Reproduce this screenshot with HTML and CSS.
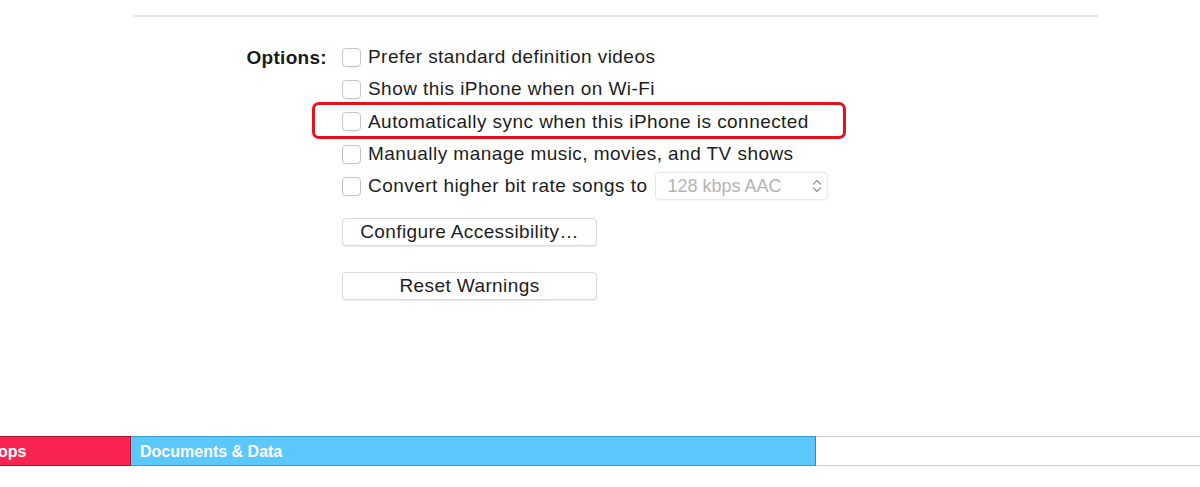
FILE: index.html
```html
<!DOCTYPE html>
<html>
<head>
<meta charset="utf-8">
<link rel="stylesheet" href="styles.css">
</head>
<body>
<div class="divider"></div>
<div class="options">
  <div class="label">Options:</div>
  <div class="list">
    <div class="row"><span class="cb"></span><span class="txt">Prefer standard definition videos</span></div>
    <div class="row"><span class="cb"></span><span class="txt">Show this iPhone when on Wi-Fi</span></div>
    <div class="row highlight"><span class="cb"></span><span class="txt">Automatically sync when this iPhone is connected</span></div>
    <div class="row"><span class="cb"></span><span class="txt">Manually manage music, movies, and TV shows</span></div>
    <div class="row"><span class="cb"></span><span class="txt">Convert higher bit rate songs to</span>
      <span class="select"><span class="sel-txt">128 kbps AAC</span>
        <svg class="chev" width="10" height="16" viewBox="0 0 10 16"><path d="M1.5 6 L5 2.5 L8.5 6 M1.5 10 L5 13.5 L8.5 10" fill="none" stroke="#9a9a9a" stroke-width="1.4" stroke-linecap="round" stroke-linejoin="round"/></svg>
      </span>
    </div>
    <div class="btn first">Configure Accessibility…</div>
    <div class="btn second">Reset Warnings</div>
  </div>
</div>
<div class="capacity">
  <div class="seg apps">ops</div>
  <div class="seg docs">Documents &amp; Data</div>
  <div class="seg free"></div>
</div>
</body>
</html>
```
FILE: styles.css
```css
html, body {
  margin: 0;
  padding: 0;
  background: #fff;
  width: 1200px;
  height: 487px;
  overflow: hidden;
  font-family: "Liberation Sans", Arial, sans-serif;
  color: #1d1d1d;
}
.divider {
  margin-left: 133px;
  width: 965px;
  height: 2px;
  margin-top: 15px;
  background: #e4e4e4;
}
.options {
  display: flex;
  margin-top: 24px;
}
.label {
  text-align: right;
  font-weight: bold;
  font-size: 19px;
  letter-spacing: 0.3px;
  line-height: 34px;
  padding-right: 15px;
  box-sizing: border-box;
  width: 342px;
  color: #1a1a1a;
}
.list {
  display: flex;
  flex-direction: column;
}
.row {
  height: 32.3px;
  display: flex;
  align-items: center;
  font-size: 19px;
  letter-spacing: 0.45px;
  position: relative;
}
.highlight::before {
  content: "";
  position: absolute;
  left: -30px;
  top: -4px;
  width: 528px;
  height: 31px;
  border: 3px solid #e4101a;
  border-radius: 7px;
}
.cb {
  width: 19px;
  height: 19px;
  border: 1px solid #c4c4c4;
  border-radius: 4px;
  box-sizing: border-box;
  background: #fff;
  box-shadow: 0 1px 1px rgba(0,0,0,0.05);
  flex: none;
}
.txt {
  margin-left: 7px;
  white-space: nowrap;
}
.select {
  margin-left: 7px;
  width: 173px;
  height: 28px;
  border: 1px solid #e6e6e6;
  border-radius: 4px;
  box-sizing: border-box;
  display: flex;
  align-items: center;
  justify-content: space-between;
  padding: 0 5px 0 12px;
  box-shadow: 0 1px 1px rgba(0,0,0,0.04);
  letter-spacing: 0;
}
.sel-txt {
  color: #b3b3b3;
  font-size: 18px;
}
.btn {
  width: 255px;
  height: 28px;
  border: 1px solid #d9d9d9;
  border-radius: 4px;
  box-sizing: border-box;
  text-align: center;
  font-size: 19px;
  letter-spacing: 0.4px;
  line-height: 26px;
  box-shadow: 0 1px 1px rgba(0,0,0,0.08);
  background: #fff;
}
.btn.first {
  margin-top: 16px;
}
.btn.second {
  margin-top: 26px;
}
.capacity {
  position: absolute;
  left: 0;
  top: 436px;
  width: 1200px;
  height: 30px;
  display: flex;
}
.seg {
  height: 30px;
  box-sizing: border-box;
  color: #fff;
  font-size: 16px;
  font-weight: bold;
  line-height: 29px;
  white-space: nowrap;
}
.apps {
  width: 131px;
  background: #fa2452;
  border-top: 1px solid #b3122f;
  border-bottom: 1px solid #b3122f;
  border-right: 1px solid #b3122f;
  text-indent: -2px;
}
.docs {
  width: 685px;
  background: #5ac8fa;
  border-top: 1px solid #3a9fd0;
  border-bottom: 1px solid #3a9fd0;
  border-right: 1px solid #2f89b8;
  padding-left: 9px;
}
.free {
  flex: 1;
  border-top: 1px solid #cfcfcf;
  border-bottom: 1px solid #cfcfcf;
}
```
